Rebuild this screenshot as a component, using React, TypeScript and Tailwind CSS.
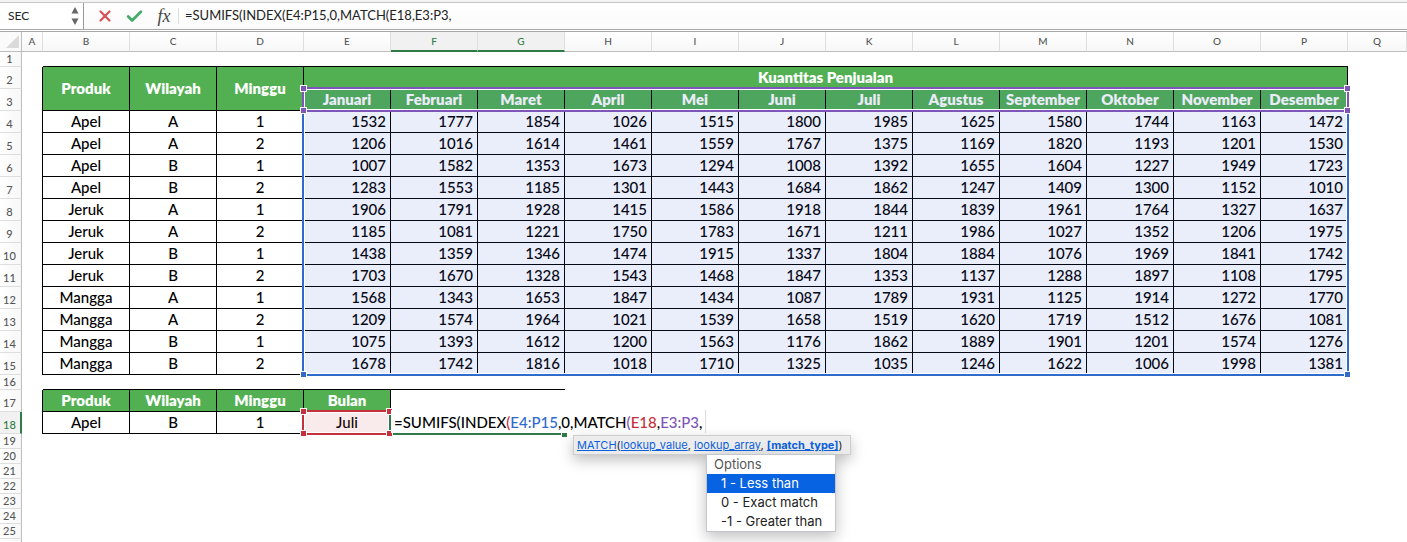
import { useState, type ReactNode } from 'react';
import { Check, X } from 'lucide-react';
import clsx from 'clsx';

const COLUMNS = 'ABCDEFGHIJKLMNOPQ'.split('');
const DATA_COLUMNS = COLUMNS.slice(1, 16);

const MONTHS = [
  'Januari', 'Februari', 'Maret', 'April', 'Mei', 'Juni',
  'Juli', 'Agustus', 'September', 'Oktober', 'November', 'Desember',
];

type Sale = { produk: string; wilayah: string; minggu: number; values: number[] };

const SALES: Sale[] = [
  { produk: 'Apel', wilayah: 'A', minggu: 1, values: [1532, 1777, 1854, 1026, 1515, 1800, 1985, 1625, 1580, 1744, 1163, 1472] },
  { produk: 'Apel', wilayah: 'A', minggu: 2, values: [1206, 1016, 1614, 1461, 1559, 1767, 1375, 1169, 1820, 1193, 1201, 1530] },
  { produk: 'Apel', wilayah: 'B', minggu: 1, values: [1007, 1582, 1353, 1673, 1294, 1008, 1392, 1655, 1604, 1227, 1949, 1723] },
  { produk: 'Apel', wilayah: 'B', minggu: 2, values: [1283, 1553, 1185, 1301, 1443, 1684, 1862, 1247, 1409, 1300, 1152, 1010] },
  { produk: 'Jeruk', wilayah: 'A', minggu: 1, values: [1906, 1791, 1928, 1415, 1586, 1918, 1844, 1839, 1961, 1764, 1327, 1637] },
  { produk: 'Jeruk', wilayah: 'A', minggu: 2, values: [1185, 1081, 1221, 1750, 1783, 1671, 1211, 1986, 1027, 1352, 1206, 1975] },
  { produk: 'Jeruk', wilayah: 'B', minggu: 1, values: [1438, 1359, 1346, 1474, 1915, 1337, 1804, 1884, 1076, 1969, 1841, 1742] },
  { produk: 'Jeruk', wilayah: 'B', minggu: 2, values: [1703, 1670, 1328, 1543, 1468, 1847, 1353, 1137, 1288, 1897, 1108, 1795] },
  { produk: 'Mangga', wilayah: 'A', minggu: 1, values: [1568, 1343, 1653, 1847, 1434, 1087, 1789, 1931, 1125, 1914, 1272, 1770] },
  { produk: 'Mangga', wilayah: 'A', minggu: 2, values: [1209, 1574, 1964, 1021, 1539, 1658, 1519, 1620, 1719, 1512, 1676, 1081] },
  { produk: 'Mangga', wilayah: 'B', minggu: 1, values: [1075, 1393, 1612, 1200, 1563, 1176, 1862, 1889, 1901, 1201, 1574, 1276] },
  { produk: 'Mangga', wilayah: 'B', minggu: 2, values: [1678, 1742, 1816, 1018, 1710, 1325, 1035, 1246, 1622, 1006, 1998, 1381] },
];

const MATCH_OPTIONS = ['1 - Less than', '0 - Exact match', '-1 - Greater than'];

const TONES = {
  blue: { line: 'border-[#2f6bcb]', handle: 'bg-[#2f6bcb]', fill: 'bg-[#2f50cb]/10' },
  purple: { line: 'border-[#7e55b8]', handle: 'bg-[#7e55b8]', fill: 'bg-[#3040c0]/10' },
  red: { line: 'border-[#c4313d] border-r-[#2f7a46]', handle: 'bg-[#c4313d]', fill: 'bg-[#c4313d]/10' },
};

// Coloured outline of a range that the formula refers to, anchored in its first cell
function RangeOutline({ tone, size }: { tone: keyof typeof TONES; size: string }) {
  const { line, handle, fill } = TONES[tone];
  const corners = ['-top-0.5 -left-0.5', '-top-0.5 -right-0.5', '-bottom-0.5 -left-0.5', '-bottom-0.5 -right-0.5'];
  return (
    <div className={clsx('pointer-events-none absolute -top-0.5 -left-0.5', size)}>
      <div className={clsx('h-full border-2', line)}>
        <div className={clsx('h-full border border-white bg-clip-padding', fill)} />
      </div>
      {corners.map((corner) => (
        <span key={corner} className={clsx('absolute size-[7px] border border-white', handle, corner)} />
      ))}
    </div>
  );
}

function RowHeader({ n, active, tall }: { n?: number; active?: boolean; tall?: boolean }) {
  return (
    <th
      scope="row"
      className={clsx(
        'border-b border-b-[#dedede] pt-0 pl-0 text-center align-bottom text-[11px] leading-[14px] font-medium',
        tall ? 'pb-px' : 'pb-0',
        active
          ? 'border-r-2 border-r-[#2f7a46] bg-[#f1f1f1] pr-px text-[#2f7a46]'
          : 'border-r border-r-[#bdbdbd] bg-linear-to-r from-white to-[#f7f7f7] pr-0.5 text-[#555]',
      )}
    >
      {n}
    </th>
  );
}

function Cell({ children, className }: { children?: ReactNode; className?: string }) {
  return <td className={clsx('border-r border-b border-black p-0 text-center', className)}>{children}</td>;
}

function HeadCell({ children, className, rowSpan, colSpan }: {
  children: ReactNode;
  className?: string;
  rowSpan?: number;
  colSpan?: number;
}) {
  return (
    <th
      rowSpan={rowSpan}
      colSpan={colSpan}
      className={clsx('border-r border-b border-black bg-[#52b052] p-0 text-center font-extrabold whitespace-nowrap text-white', className)}
    >
      {children}
    </th>
  );
}

function EmptyRow({ n }: { n?: number }) {
  return (
    <tr className="h-[15px]">
      <RowHeader n={n} />
      <td colSpan={17} className="p-0" />
    </tr>
  );
}

function FormulaBar() {
  const [name, setName] = useState('SEC');
  const [formula, setFormula] = useState('=SUMIFS(INDEX(E4:P15,0,MATCH(E18,E3:P3,');
  return (
    <div className="border-b border-[#a8a8a8] pb-px">
      <div className="h-0.5 bg-[#f3f3f3]" />
      <div className="flex h-7 items-center border-y border-t-[#c6c6c6] border-b-[#a8a8a8] bg-linear-to-b from-white to-[#fafafa]">
        <div className="flex h-full w-[84px] items-center border-r border-[#999] bg-white pr-1">
          <input
            aria-label="Name box"
            value={name}
            onChange={(e) => setName(e.target.value)}
            className="w-0 grow bg-transparent pl-2 text-xs text-[#222] outline-none"
          />
          <button aria-label="Show names" className="text-[#666]">
            <svg width="8" height="18" viewBox="0 0 8 18" fill="currentColor">
              <path d="M4 0 7.5 6.5H.5zM4 18 .5 11.5h7z" />
            </svg>
          </button>
        </div>
        <button aria-label="Cancel" className="ml-3 text-[#d65458]">
          <X size={18} strokeWidth={3} />
        </button>
        <button aria-label="Enter" className="ml-[11px] text-[#45ac68]">
          <Check size={19} strokeWidth={3.5} />
        </button>
        <button aria-label="Insert function" className="ml-3 w-4 font-['Liberation_Serif',serif] text-[18px] leading-5 text-[#444] italic">
          fx
        </button>
        <span className="ml-1.5 h-4 w-px bg-[#dcdcdc]" />
        <input
          aria-label="Formula"
          value={formula}
          onChange={(e) => setFormula(e.target.value)}
          className="w-0 grow bg-transparent pl-1.5 text-[13px] text-[#222] outline-none"
        />
      </div>
    </div>
  );
}

function MatchHint() {
  const [selected, setSelected] = useState(0);
  return (
    <div className="absolute top-[23px] left-[182px] z-40 font-[Inter,sans-serif] font-normal whitespace-nowrap">
      <div className="h-5 w-[278px] border border-[#cdcdcd] bg-[#ececec] px-[3px] text-left text-[11px] leading-[18px] text-[#222] shadow-[0_5px_14px_rgba(0,0,0,0.25)]">
        <a href="#match" className="text-[#0a60dd] underline">MATCH</a>(
        <a href="#lookup-value" className="text-[#0a60dd] underline">lookup_value</a>,{' '}
        <a href="#lookup-array" className="text-[#0a60dd] underline">lookup_array</a>,{' '}
        <a href="#match-type" className="font-bold text-[#0a60dd] underline">[match_type]</a>)
      </div>
      <div className="relative -mt-px ml-[133px] w-[130px] border border-[#c3c6ca] bg-white text-left text-[13px] leading-[19px] text-[#222] shadow-[0_5px_14px_rgba(0,0,0,0.25)]">
        <div className="pl-[7px] text-[#555]">Options</div>
        {MATCH_OPTIONS.map((option, i) => (
          <button
            key={option}
            onClick={() => setSelected(i)}
            className={clsx('block w-full pl-3.5 text-left', i === selected && 'bg-[#0763e1] text-white')}
          >
            {option}
          </button>
        ))}
      </div>
    </div>
  );
}

// In-cell editor of F18, spilling over the cells to its right
function CellEditor() {
  return (
    <>
      <div className="absolute top-[21px] left-0 z-10 h-0.5 w-[170px] bg-[#2f7a46]" />
      <span className="absolute top-[19px] left-[170px] z-10 size-[7px] border border-white bg-[#2f7a46]" />
      <div
        role="textbox"
        aria-label="F18"
        contentEditable
        suppressContentEditableWarning
        className="absolute -top-0.5 left-0 z-30 border-r border-[#ddd] bg-white pt-0.5 pr-0.5 pl-[3px] leading-[21px] whitespace-nowrap outline-none"
      >
        =SUMIFS(INDEX<span className="text-[#c4313d]">(</span>
        <span className="text-[#2f6bcb]">E4:P15</span>,0,MATCH
        <span className="text-[#7e55b8]">(</span>
        <span className="text-[#c4313d]">E18</span>,<span className="text-[#7e55b8]">E3:P3</span>,
      </div>
      <MatchHint />
    </>
  );
}

function Sheet() {
  return (
    <table className="w-full table-fixed border-separate border-spacing-0 text-[15px] leading-[21px] font-medium text-black">
      <colgroup>
        <col className="w-[22px]" />
        <col className="w-[21px]" />
        {DATA_COLUMNS.map((c) => (
          <col key={c} className="w-[87px]" />
        ))}
        <col />
      </colgroup>
      <thead>
        <tr className="h-5">
          <td className="border-r border-b border-[#bdbdbd] bg-[#fafafa] p-0">
            <svg className="mr-0.5 ml-auto" width="13" height="13" viewBox="0 0 13 13" fill="#dadada">
              <path d="M13 0v13H0z" />
            </svg>
          </td>
          {COLUMNS.map((c) => (
            <th
              key={c}
              scope="col"
              className={clsx(
                'border-r border-r-[#dedede] p-0 text-center align-top text-[10px] leading-[18px] font-medium',
                c === 'F' || c === 'G'
                  ? 'border-b-2 border-b-[#2f7a46] bg-[#f1f1f1] text-[#2f7a46]'
                  : 'border-b border-b-[#bdbdbd] bg-linear-to-b from-white to-[#f7f7f7] text-[#555]',
              )}
            >
              {c}
            </th>
          ))}
        </tr>
      </thead>
      <tbody>
        <tr className="h-[15px]">
          <RowHeader n={1} />
          <td className="p-0" />
          <td colSpan={15} className="border-b border-black p-0" />
          <td className="p-0" />
        </tr>
        <tr className="h-[22px]">
          <RowHeader n={2} tall />
          <td rowSpan={14} className="border-r border-black p-0" />
          <HeadCell rowSpan={2}>Produk</HeadCell>
          <HeadCell rowSpan={2}>Wilayah</HeadCell>
          <HeadCell rowSpan={2}>Minggu</HeadCell>
          <HeadCell colSpan={12}>Kuantitas Penjualan</HeadCell>
        </tr>
        <tr className="h-[22px]">
          <RowHeader n={3} tall />
          {MONTHS.map((month, i) => (
            <HeadCell key={month} className={i === 0 ? 'relative z-20' : undefined}>
              {month}
              {i === 0 && <RangeOutline tone="purple" size="w-[1047px] h-[25px]" />}
            </HeadCell>
          ))}
        </tr>
        {SALES.map((sale, row) => (
          <tr key={row} className="h-[22px]">
            <RowHeader n={row + 4} tall />
            <Cell>{sale.produk}</Cell>
            <Cell>{sale.wilayah}</Cell>
            <Cell>{sale.minggu}</Cell>
            {sale.values.map((value, i) => (
              <Cell key={i} className={clsx('pr-1! text-right!', row === 0 && i === 0 && 'relative z-10')}>
                {value}
                {row === 0 && i === 0 && <RangeOutline tone="blue" size="w-[1047px] h-[267px]" />}
              </Cell>
            ))}
          </tr>
        ))}
        <tr className="h-[15px]">
          <RowHeader n={16} />
          <td className="p-0" />
          <td colSpan={6} className="border-b border-black p-0" />
        </tr>
        <tr className="h-[22px]">
          <RowHeader n={17} tall />
          <td className="border-r border-black p-0" />
          <HeadCell>Produk</HeadCell>
          <HeadCell>Wilayah</HeadCell>
          <HeadCell>Minggu</HeadCell>
          <HeadCell>Bulan</HeadCell>
        </tr>
        <tr className="h-[22px]">
          <RowHeader n={18} active tall />
          <td className="border-r border-black p-0" />
          <Cell>Apel</Cell>
          <Cell>B</Cell>
          <Cell>1</Cell>
          <Cell className="relative z-20">
            Juli
            <RangeOutline tone="red" size="w-[89px] h-[25px]" />
          </Cell>
          <td className="relative p-0 text-left">
            <CellEditor />
          </td>
        </tr>
        {[19, 20, 21, 22, 23, 24, 25].map((n) => (
          <EmptyRow key={n} n={n} />
        ))}
        <EmptyRow />
      </tbody>
    </table>
  );
}

export default function App() {
  return (
    <div className="h-screen overflow-hidden bg-white font-[Lato,sans-serif]">
      <FormulaBar />
      <Sheet />
    </div>
  );
}
